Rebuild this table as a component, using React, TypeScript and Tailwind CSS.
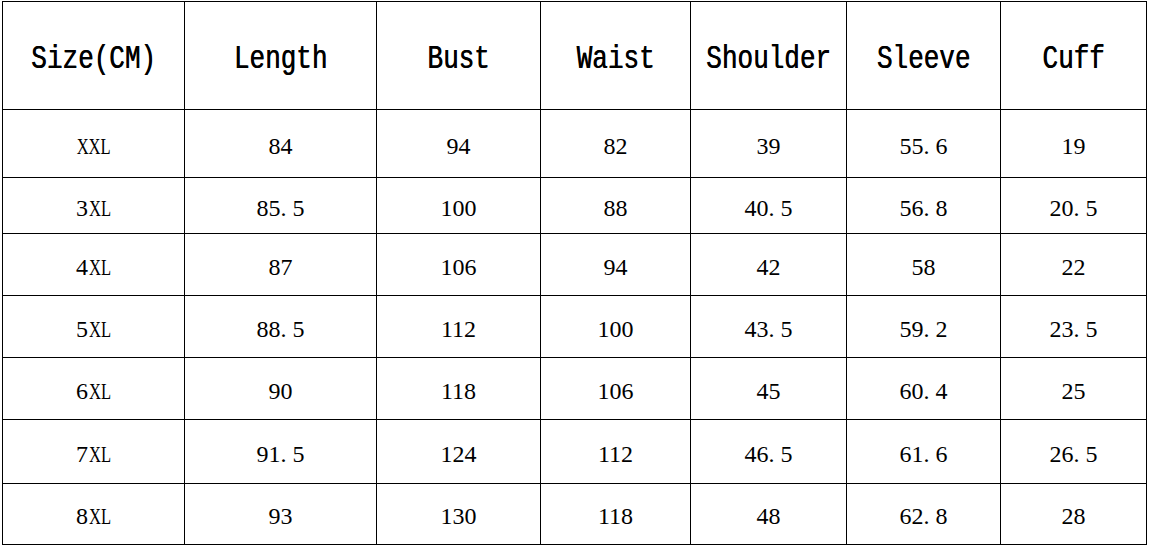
const headers = ['Size(CM)', 'Length', 'Bust', 'Waist', 'Shoulder', 'Sleeve', 'Cuff'];

const colWidths = ['w-[182px]', 'w-[192px]', 'w-[164px]', 'w-[150px]', 'w-[156px]', 'w-[154px]', 'w-[146px]'];

const rows = [
  { size: 'XXL', h: 'h-[68px]', vals: ['84', '94', '82', '39', '55.6', '19'] },
  { size: '3XL', h: 'h-[56px]', vals: ['85.5', '100', '88', '40.5', '56.8', '20.5'] },
  { size: '4XL', h: 'h-[62px]', vals: ['87', '106', '94', '42', '58', '22'] },
  { size: '5XL', h: 'h-[62px]', vals: ['88.5', '112', '100', '43.5', '59.2', '23.5'] },
  { size: '6XL', h: 'h-[62px]', vals: ['90', '118', '106', '45', '60.4', '25'] },
  { size: '7XL', h: 'h-[64px]', vals: ['91.5', '124', '112', '46.5', '61.6', '26.5'] },
  { size: '8XL', h: 'h-[61px]', vals: ['93', '130', '118', '48', '62.8', '28'] },
];

// SimSun-style: the decimal point takes a full half-width cell
function Num({ value }: { value: string }) {
  const [a, b] = value.split('.');
  if (b === undefined) return <>{value}</>;
  return (
    <>
      {a}
      <span className="inline-block w-[12px] text-left">.</span>
      {b}
    </>
  );
}

// narrow letters like the monospaced CJK font
function SizeLabel({ size }: { size: string }) {
  const letters = size.replace(/^\d+/, '');
  const digits = size.slice(0, size.length - letters.length);
  const w = letters.length === 3 ? 'w-[34px]' : 'w-[23px]';
  return (
    <>
      {digits}
      <span className={`inline-flex justify-center ${w}`}>
        <span className="inline-block scale-x-[0.69]">{letters}</span>
      </span>
    </>
  );
}

export default function App() {
  return (
    <div className="w-[1149px] h-[548px] bg-white overflow-hidden pt-px pl-[2px]">
      <table className="table-fixed border-collapse text-black">
        <thead>
          <tr className="h-[108px]">
            {headers.map((h, i) => (
              <th
                key={h}
                className={`${colWidths[i]} border border-black p-0 pt-[8px] text-center align-middle font-normal text-[26px] [font-family:'Liberation_Mono',monospace] whitespace-nowrap`}
              >
                <span className="inline-block scale-y-[1.3] [text-shadow:0.5px_0_0_#000]">{h}</span>
              </th>
            ))}
          </tr>
        </thead>
        <tbody>
          {rows.map((r) => (
            <tr key={r.size} className={r.h}>
              <td className="border border-black p-0 pt-[4px] text-center align-middle text-[24px] [font-family:'Liberation_Serif',serif] whitespace-nowrap">
                <SizeLabel size={r.size} />
              </td>
              {r.vals.map((v, i) => (
                <td
                  key={i}
                  className="border border-black p-0 pt-[4px] text-center align-middle text-[24px] [font-family:'Liberation_Serif',serif] whitespace-nowrap"
                >
                  <Num value={v} />
                </td>
              ))}
            </tr>
          ))}
        </tbody>
      </table>
    </div>
  );
}
